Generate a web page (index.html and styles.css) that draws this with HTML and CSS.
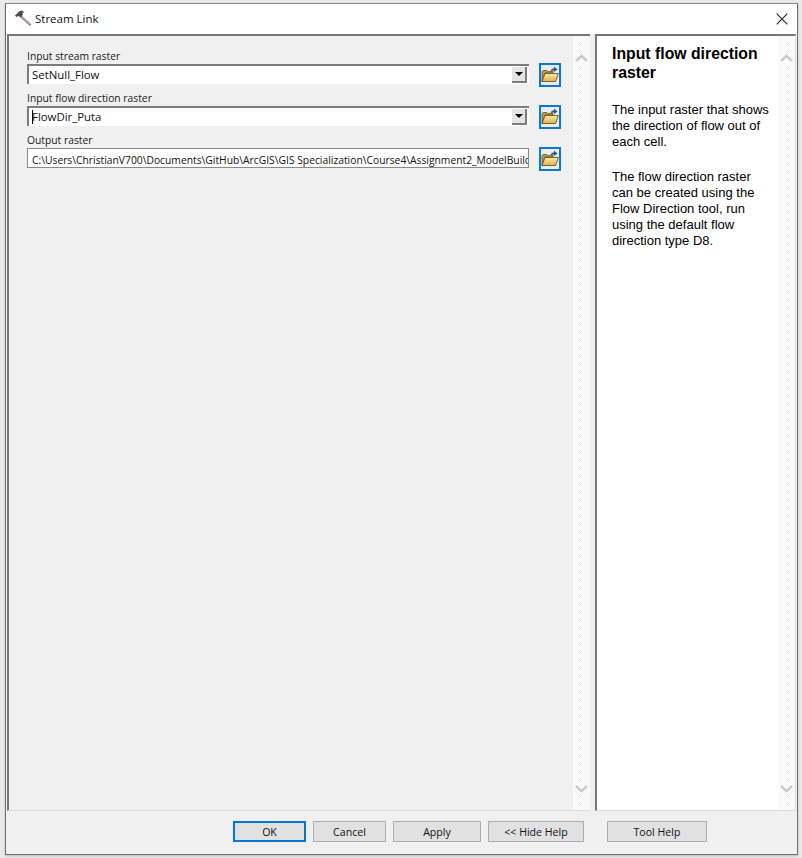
FILE: index.html
```html
<!DOCTYPE html>
<html lang="en">
<head>
<meta charset="utf-8">
<title>Stream Link</title>
<link rel="stylesheet" href="styles.css">
</head>
<body>
<div class="window">
  <header class="titlebar">
    <div class="title-left">
      <svg class="hammer" width="18" height="18" viewBox="0 0 18 18">
        <path d="M6 6.5 L16 15.5" stroke="#9a8f80" stroke-width="2.4" stroke-linecap="round"/>
        <path d="M6.6 6 L16 15" stroke="#d8d2c8" stroke-width="0.8"/>
        <path d="M1 6.5 L5.5 2.2 L8 1.6 L10.6 3.4 L8 3.8 L9 5.4 L6.6 8.4 L4.8 6.8 L2.4 8 Z" fill="#4a4a4a"/>
      </svg>
      <span class="title-text">Stream Link</span>
    </div>
    <svg class="close" width="12" height="12" viewBox="0 0 12 12">
      <path d="M.7.7 11.3 11.3M11.3.7.7 11.3" stroke="#222" stroke-width="1.1" fill="none"/>
    </svg>
  </header>
  <main class="content">
    <section class="form-pane">
      <div class="form">
        <div class="field">
          <label class="field-label">Input stream raster</label>
          <div class="field-row">
            <div class="combo"><span class="combo-value">SetNull_Flow</span><span class="combo-btn"><i class="arrow"></i></span></div>
            <button class="browse" type="button" aria-label="Browse">
              <svg width="18" height="17" viewBox="0 0 18 17"><use href="#folder"/></svg>
            </button>
          </div>
        </div>
        <div class="field">
          <label class="field-label">Input flow direction raster</label>
          <div class="field-row">
            <div class="combo"><span class="combo-value caret">FlowDir_Puta</span><span class="combo-btn"><i class="arrow"></i></span></div>
            <button class="browse" type="button" aria-label="Browse">
              <svg width="18" height="17" viewBox="0 0 18 17"><use href="#folder"/></svg>
            </button>
          </div>
        </div>
        <div class="field">
          <label class="field-label">Output raster</label>
          <div class="field-row">
            <div class="textbox"><span class="textbox-value">C:\Users\ChristianV700\Documents\GitHub\ArcGIS\GIS Specialization\Course4\Assignment2_ModelBuilder</span></div>
            <button class="browse" type="button" aria-label="Browse">
              <svg width="18" height="17" viewBox="0 0 18 17"><use href="#folder"/></svg>
            </button>
          </div>
        </div>
      </div>
      <div class="scrollbar">
        <svg width="13" height="8" viewBox="0 0 13 8"><path d="M1 7 6.5 1.8 12 7" stroke="#c8c8c8" stroke-width="2.4" fill="none"/></svg>
        <svg width="13" height="8" viewBox="0 0 13 8"><path d="M1 1 6.5 6.2 12 1" stroke="#c8c8c8" stroke-width="2.4" fill="none"/></svg>
      </div>
    </section>
    <aside class="help-pane">
      <div class="help">
        <h1 class="help-title">Input flow direction raster</h1>
        <p class="help-text">The input raster that shows the direction of flow out of each cell.</p>
        <p class="help-text">The flow direction raster can be created using the Flow Direction tool, run using the default flow direction type D8.</p>
      </div>
      <div class="scrollbar">
        <svg width="13" height="8" viewBox="0 0 13 8"><path d="M1 7 6.5 1.8 12 7" stroke="#c8c8c8" stroke-width="2.4" fill="none"/></svg>
        <svg width="13" height="8" viewBox="0 0 13 8"><path d="M1 1 6.5 6.2 12 1" stroke="#c8c8c8" stroke-width="2.4" fill="none"/></svg>
      </div>
    </aside>
  </main>
  <footer class="buttons">
    <button class="btn btn-ok" type="button">OK</button>
    <button class="btn btn-cancel" type="button">Cancel</button>
    <button class="btn btn-apply" type="button">Apply</button>
    <button class="btn btn-hide" type="button">&lt;&lt; Hide Help</button>
    <button class="btn btn-tool" type="button">Tool Help</button>
  </footer>
</div>
<svg class="defs" width="0" height="0">
  <defs>
    <linearGradient id="fold" x1="0" y1="0" x2="0" y2="1">
      <stop offset="0" stop-color="#fbeaa6"/>
      <stop offset="1" stop-color="#dcb44e"/>
    </linearGradient>
    <g id="folder">
      <path d="M1 15.5V5.5L2 4.5H6L7 5.5H12V7H4L1 15.5Z" fill="#b89a4a" stroke="#6b5420" stroke-width=".8"/>
      <path d="M1 15.5 4 7.5H17.3L14.6 15.5Z" fill="url(#fold)" stroke="#6b5420" stroke-width=".9"/>
      <path d="M9.5 5C10 3 11.5 2.5 13 2.5V.6L16.5 3.4 13 6V4.4C11.5 4.4 10.5 4.6 9.5 5Z" fill="#1f5c9e"/>
    </g>
  </defs>
</svg>
</body>
</html>
```

FILE: styles.css
```css
* { box-sizing: border-box; }
html, body { margin: 0; padding: 0; }
body {
  width: 802px;
  height: 858px;
  background: #e9e9e9;
  padding: 3px 4px 3px 5px;
  overflow: hidden;
  font-family: "Open Sans", "Noto Sans", sans-serif;
  color: #111;
}
.window {
  width: 793px;
  height: 852px;
  border: 1px solid #6f6f6f;
  border-top-color: #8a8a8a;
  background: #f0f0f0;
  display: flex;
  flex-direction: column;
  box-shadow: 0 1px 2px rgba(0,0,0,.2);
}
.titlebar {
  height: 30px;
  flex: none;
  background: #fff;
  display: flex;
  align-items: center;
  justify-content: space-between;
  padding: 0 9px 2px 8px;
}
.title-left { display: flex; align-items: center; gap: 3px; }
.hammer { display: block; margin-top: -1px; }
.title-text { font-size: 11.5px; color: #111; }
.close { display: block; margin-top: 1px; }
.content {
  flex: 1;
  min-height: 0;
  display: flex;
  padding-left: 1px;
}
.form-pane {
  width: 583px;
  flex: none;
  border-top: 2px solid #777;
  border-left: 2px solid #777;
  display: flex;
  background: #f0f0f0;
  border-bottom: 1px solid #dcdcdc;
}
.form { flex: 1; padding: 13px 12px 0 18px; display: flex; flex-direction: column; gap: 5px; }
.field { display: flex; flex-direction: column; }
.field-label { font-size: 10.3px; line-height: 15px; height: 14px; color: #1a1a1a; }
.field-row { display: flex; align-items: center; justify-content: space-between; height: 23px; }
.combo {
  width: 502px;
  height: 20px;
  background: #fff;
  border-top: 2px solid #7d7d7d;
  border-left: 2px solid #7d7d7d;
  display: flex;
  align-items: center;
  justify-content: space-between;
  margin-top: -1px;
}
.combo-value { font-size: 11.4px; padding-left: 3px; line-height: 16px; }
.caret { border-left: 0; position: relative; }
.caret::before { content: ""; position: absolute; left: 3px; top: 1px; width: 1px; height: 14px; background: #000; }
.combo-btn {
  width: 15px;
  height: 16px;
  margin-right: 2px;
  background: #e4e4e4;
  border-right: 2px solid #7d7d7d;
  border-bottom: 2px solid #7d7d7d;
  display: flex;
  align-items: center;
  justify-content: center;
}
.arrow { width: 0; height: 0; border-left: 4px solid transparent; border-right: 4px solid transparent; border-top: 4px solid #000; }
.textbox {
  width: 502px;
  height: 20px;
  background: #fff;
  border: 1px solid #8a8a8a;
  overflow: hidden;
  white-space: nowrap;
  padding: 0 0 0 4px;
  line-height: 18px;
  margin-top: -1px;
}
.textbox-value { font-size: 10.3px; }
.browse {
  width: 22px;
  height: 24px;
  padding: 0;
  border: 2px solid #0a78d7;
  background: #ececec;
  display: flex;
  align-items: center;
  justify-content: center;
  flex: none;
}
.scrollbar {
  width: 17px;
  flex: none;
  display: flex;
  flex-direction: column;
  justify-content: space-between;
  align-items: center;
  padding: 18px 0 17px;
  background: repeating-conic-gradient(#f3f3f3 0 25%, #fff 0 50%) 0 0 / 2px 2px;
}
.help-pane {
  width: 201px;
  flex: none;
  margin-left: 5px;
  background: #fff;
  border-top: 2px solid #777;
  border-left: 2px solid #777;
  border-right: 1px solid #dcdcdc;
  border-bottom: 1px solid #dcdcdc;
  display: flex;
}
.help { flex: 1; padding: 8px 6px 0 15px; font-family: "Liberation Sans", Arial, sans-serif; color: #000; }
.help-title { font-size: 15.8px; line-height: 19px; font-weight: 700; margin: 0 0 20px; }
.help-text { font-size: 13px; line-height: 16px; margin: 0 0 19px; }
.buttons {
  height: 43px;
  flex: none;
  padding: 10px 0 0 227px;
  display: flex;
  align-items: flex-start;
}
.btn {
  height: 21px;
  padding: 2px 0 0;
  margin-right: 7px;
  background: #e1e1e1;
  border: 1px solid #adadad;
  font-family: "Open Sans", "Noto Sans", sans-serif;
  font-size: 10.6px;
  color: #111;
  line-height: 1;
}
.btn-ok { width: 73px; border: 2px solid #0078d7; }
.btn-cancel { width: 73px; }
.btn-apply { width: 88px; }
.btn-hide { width: 96px; margin-right: 23px; }
.btn-tool { width: 100px; }
.defs { position: absolute; }
```
